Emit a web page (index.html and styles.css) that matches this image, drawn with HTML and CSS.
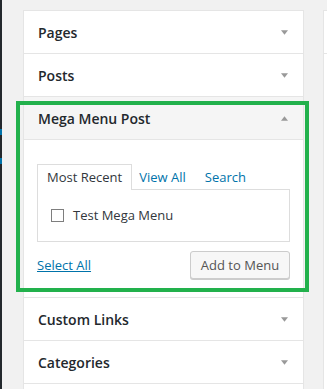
FILE: index.html
```html
<!DOCTYPE html>
<html>
<head>
<meta charset="utf-8">
<link rel="stylesheet" href="styles.css">
</head>
<body>
<div class="adminmenu">
  <div class="mark mark-1"></div>
  <div class="mark mark-2"></div>
</div>
<div class="col">
  <div class="section">
    <div class="head"><span>Pages</span><svg class="arrow" width="7" height="5" viewBox="0 0 7 5"><path d="M0 0.2 H7 L3.5 4.8 Z" fill="#999"/></svg></div>
  </div>
  <div class="section">
    <div class="head"><span>Posts</span><svg class="arrow" width="7" height="5" viewBox="0 0 7 5"><path d="M0 0.2 H7 L3.5 4.8 Z" fill="#999"/></svg></div>
  </div>
  <div class="section open">
    <div class="head"><span>Mega Menu Post</span><svg class="arrow" width="7" height="5" viewBox="0 0 7 5"><path d="M0 4.8 H7 L3.5 0.2 Z" fill="#999"/></svg></div>
    <div class="inside">
      <div class="tabs">
        <span class="tab active">Most Recent</span>
        <a class="tab link first">View All</a>
        <a class="tab link second">Search</a>
      </div>
      <div class="tabpanel">
        <span class="checkbox"></span>
        <span class="label">Test Mega Menu</span>
      </div>
      <div class="actions">
        <a class="selectall">Select All</a>
        <button class="btn">Add to Menu</button>
      </div>
    </div>
  </div>
  <div class="section">
    <div class="head"><span>Custom Links</span><svg class="arrow" width="7" height="5" viewBox="0 0 7 5"><path d="M0 0.2 H7 L3.5 4.8 Z" fill="#999"/></svg></div>
  </div>
  <div class="section">
    <div class="head"><span>Categories</span><svg class="arrow" width="7" height="5" viewBox="0 0 7 5"><path d="M0 0.2 H7 L3.5 4.8 Z" fill="#999"/></svg></div>
  </div>
  <div class="section last"></div>
</div>
<div class="rightpanel">
  <div class="rhead"></div>
</div>
</body>
</html>
```
FILE: styles.css
```css
html, body {
  margin: 0;
  padding: 0;
}
body {
  background: #f1f1f1;
  display: flex;
  align-items: flex-start;
  height: 389px;
  overflow: hidden;
  font-family: "Open Sans", "Noto Sans", sans-serif;
  color: #32373c;
}
.adminmenu {
  width: 2px;
  height: 389px;
  background: #23282d;
  display: flex;
  flex-direction: column;
}
.mark {
  width: 2px;
  height: 6px;
  background: #0073aa;
}
.mark-1 { margin-top: 129px; }
.mark-2 { margin-top: 23px; }
.col {
  margin-left: 21px;
  margin-top: 10px;
  width: 279px;
  border: 1px solid #e5e5e5;
  border-bottom: none;
  background: #fff;
}
.section {
  border-bottom: 1px solid #e5e5e5;
}
.section.last {
  border-bottom: none;
  height: 5px;
}
.head {
  height: 42px;
  display: flex;
  align-items: center;
  justify-content: space-between;
  padding: 0 15px 0 14px;
  font-size: 14px;
  font-weight: 600;
  color: #23282d;
}
.arrow {
  display: block;
}
.open {
  position: relative;
}
.open::after {
  content: "";
  position: absolute;
  top: 4px;
  bottom: 5px;
  left: -8px;
  right: -6px;
  border: 4px solid #22b14c;
  pointer-events: none;
}
.open .head {
  background: #f5f5f5;
  border-bottom: 1px solid #e5e5e5;
}
.inside {
  padding: 24px 13px 18px 13px;
}
.tabs {
  display: flex;
  align-items: flex-end;
  height: 25px;
  font-size: 13px;
}
.tab {
  line-height: 24px;
}
.tab.active {
  position: relative;
  border: 1px solid #dddddd;
  border-bottom: none;
  background: #fff;
  padding: 0 9px 1px 9px;
  margin-bottom: -1px;
  color: #32373c;
}
.tab.link {
  color: #0073aa;
}
.tab.first { margin-left: 7px; }
.tab.second { margin-left: 19px; }
.tabpanel {
  border: 1px solid #dddddd;
  height: 51px;
  display: flex;
  align-items: center;
  padding: 0 13px;
  background: #fff;
}
.checkbox {
  width: 11px;
  height: 11px;
  border: 1px solid #7e7e7e;
  background: #fff;
  margin-right: 9px;
}
.label {
  font-size: 13px;
  color: #32373c;
  position: relative;
  top: -1px;
}
.actions {
  margin-top: 9px;
  display: flex;
  justify-content: space-between;
  align-items: center;
}
.selectall {
  font-size: 13px;
  color: #0073aa;
  text-decoration: underline;
}
.btn {
  font-family: "Open Sans", "Noto Sans", sans-serif;
  font-size: 13px;
  color: #555;
  background: #f7f7f7;
  border: 1px solid #cccccc;
  border-radius: 3px;
  box-shadow: 0 1px 0 #cccccc;
  height: 28px;
  width: 100px;
  padding: 0;
}
.rightpanel {
  margin-left: 19px;
  margin-top: 10px;
  flex: 1;
  height: 379px;
  background: #fff;
  border-left: 1px solid #e5e5e5;
  border-top: 1px solid #e5e5e5;
}
.rhead {
  height: 42px;
  border-bottom: 1px solid #e5e5e5;
}
```
